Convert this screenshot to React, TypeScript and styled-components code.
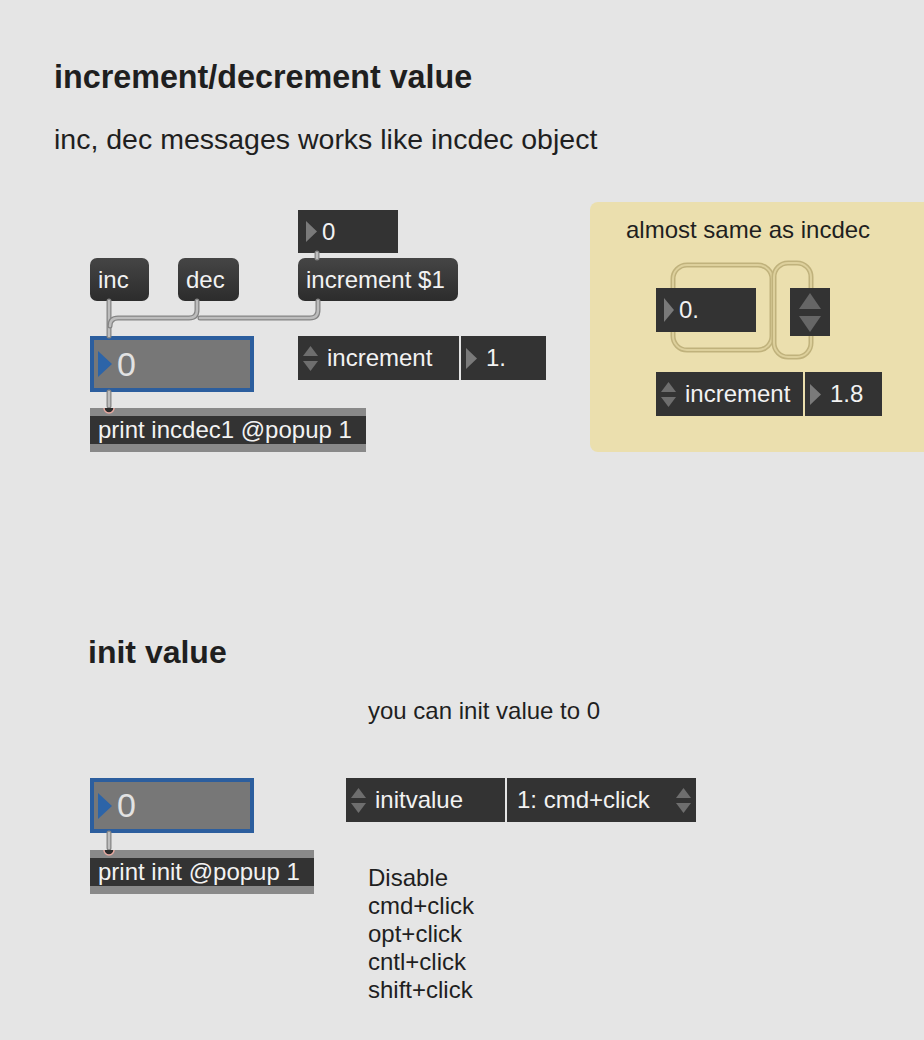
import styled, { createGlobalStyle, css } from "styled-components"

const GlobalStyle = createGlobalStyle`
  html, body {
    margin: 0;
    padding: 0;
    background: #e5e5e5;
  }
  body {
    font-family: "Liberation Sans", Arial, sans-serif;
  }
`

type Pos = { $x: number; $y: number; $w?: number; $h?: number }

// patcher objects sit on a free canvas: their place is the content itself
const at = css<Pos>`
  position: absolute;
  left: ${p => p.$x}px;
  top: ${p => p.$y}px;
  ${p => (p.$w !== undefined ? `width: ${p.$w}px;` : "")}
  ${p => (p.$h !== undefined ? `height: ${p.$h}px;` : "")}
  box-sizing: border-box;
`

const Canvas = styled.div`
  position: relative;
  width: 924px;
  height: 1040px;
  overflow: hidden;
  background: #e5e5e5;
`

const Comment = styled.div<Pos & { $size: number; $bold?: boolean }>`
  ${at}
  font-size: ${p => p.$size}px;
  font-weight: ${p => (p.$bold ? 700 : 400)};
  line-height: ${p => (p.$bold ? 1 : "28px")};
  color: #1f1f1f;
  white-space: pre;
`

const Panel = styled.div<Pos>`
  ${at}
  background: #ebdfae;
  border-radius: 8px;
`

const Message = styled.div<Pos>`
  ${at}
  display: flex;
  align-items: center;
  padding: 0 8px;
  border-radius: 7px;
  background: linear-gradient(#454545, #2c2c2c);
  color: #f2f2f2;
  font-size: 24px;
  white-space: pre;
`

const NumBox = styled.div<Pos>`
  ${at}
  display: flex;
  align-items: center;
  gap: 5px;
  padding-left: 8px;
  background: #333333;
  color: #f2f2f2;
  font-size: 24px;
`

const BigNum = styled.div<Pos>`
  ${at}
  display: flex;
  align-items: center;
  gap: 5px;
  padding-left: 4px;
  border: 4px solid #2c5e9e;
  background: #777777;
  color: #e2e2e2;
  font-size: 34px;
`

const PrintObj = styled.div<Pos>`
  ${at}
  display: flex;
  align-items: center;
  padding-left: 8px;
  border-top: 8px solid #898989;
  border-bottom: 8px solid #898989;
  background: #333333;
  color: #f2f2f2;
  font-size: 24px;
  white-space: pre;
`

const AttrRow = styled.div<Pos>`
  ${at}
  display: flex;
  gap: 2px;
`

const Cell = styled.div<{ $w: number }>`
  width: ${p => p.$w}px;
  display: flex;
  align-items: center;
  gap: 9px;
  padding: 0 5px;
  box-sizing: border-box;
  background: #333333;
  color: #f2f2f2;
  font-size: 24px;
  white-space: pre;
`

const MenuText = styled.span`
  flex: 1;
  padding-left: 5px;
`

const Spinner = styled.div<Pos>`
  ${at}
  display: flex;
  align-items: center;
  justify-content: center;
  background: #333333;
`

const Overlay = styled.svg`
  position: absolute;
  left: 0;
  top: 0;
  pointer-events: none;
`

const Tri = ({ color = "#7a7a7a", w = 11, h = 21 }: { color?: string; w?: number; h?: number }) => (
  <svg width={w} height={h} viewBox={`0 0 ${w} ${h}`}>
    <polygon points={`0,0 ${w},${h / 2} 0,${h}`} fill={color} />
  </svg>
)

const Arrows = ({ w = 15, h = 10, gap = 5, color = "#6e6e6e" }: { w?: number; h?: number; gap?: number; color?: string }) => (
  <svg width={w} height={h * 2 + gap} viewBox={`0 0 ${w} ${h * 2 + gap}`}>
    <polygon points={`0,${h} ${w / 2},0 ${w},${h}`} fill={color} />
    <polygon points={`0,${h + gap} ${w},${h + gap} ${w / 2},${h * 2 + gap}`} fill={color} />
  </svg>
)

const Cord = ({ d }: { d: string }) => (
  <g fill="none" strokeLinecap="round">
    <path d={d} stroke="#858585" strokeWidth={5} />
    <path d={d} stroke="#bdbdbd" strokeWidth={2.5} />
  </g>
)

// inlet dot: only the lower half shows inside the object's top band
const InletDot = ({ x, y }: { x: number; y: number }) => (
  <path
    d={`M${x - 5} ${y} A5 5 0 0 0 ${x + 5} ${y}`}
    fill="#2a2a2a"
    stroke="#e6a8a0"
    strokeWidth={1.5}
  />
)

const Loop = ({ x, y, w, h, r }: { x: number; y: number; w: number; h: number; r: number }) => (
  <g fill="none">
    <rect x={x} y={y} width={w} height={h} rx={r} stroke="#c0b27c" strokeWidth={5} />
    <rect x={x} y={y} width={w} height={h} rx={r} stroke="#ddd09c" strokeWidth={2} />
  </g>
)

export default function App() {
  return (
    <Canvas>
      <GlobalStyle />

      <Comment $x={54} $y={61} $size={32.3} $bold>increment/decrement value</Comment>
      <Comment $x={54} $y={125} $size={28.5}>inc, dec messages works like incdec object</Comment>

      <Panel $x={590} $y={202} $w={360} $h={250} />
      <Overlay width={924} height={1040}>
        <Loop x={673} y={265} w={99} h={85} r={14} />
        <Loop x={774} y={263} w={37} h={94} r={14} />
      </Overlay>
      <Comment $x={626} $y={216} $size={24}>almost same as incdec</Comment>
      <NumBox $x={656} $y={288} $w={100} $h={44}>
        <Tri w={10} h={24} />
        0.
      </NumBox>
      <Spinner $x={790} $y={288} $w={40} $h={48}>
        <Arrows w={22} h={16} gap={7} color="#666666" />
      </Spinner>
      <AttrRow $x={656} $y={372} $h={44}>
        <Cell $w={147}>
          <Arrows />
          increment
        </Cell>
        <Cell $w={77}>
          <Tri />
          1.8
        </Cell>
      </AttrRow>

      <NumBox $x={298} $y={210} $w={100} $h={43}>
        <Tri />
        0
      </NumBox>
      <Message $x={90} $y={258} $w={59} $h={43}>inc</Message>
      <Message $x={178} $y={258} $w={61} $h={43}>dec</Message>
      <Message $x={298} $y={258} $w={160} $h={43}>increment $1</Message>
      <BigNum $x={90} $y={336} $w={164} $h={56}>
        <Tri color="#2c64a8" w={14} h={26} />
        0
      </BigNum>
      <PrintObj $x={90} $y={408} $w={276} $h={44}>print incdec1 @popup 1</PrintObj>
      <AttrRow $x={298} $y={336} $h={44}>
        <Cell $w={161}>
          <Arrows />
          increment
        </Cell>
        <Cell $w={85}>
          <Tri />
          1.
        </Cell>
      </AttrRow>

      <Comment $x={88} $y={636} $size={32} $bold>init value</Comment>
      <Comment $x={368} $y={697} $size={24}>you can init value to 0</Comment>
      <BigNum $x={90} $y={778} $w={164} $h={55}>
        <Tri color="#2c64a8" w={14} h={26} />
        0
      </BigNum>
      <PrintObj $x={90} $y={850} $w={224} $h={44}>print init @popup 1</PrintObj>
      <AttrRow $x={346} $y={778} $h={44}>
        <Cell $w={159}>
          <Arrows />
          initvalue
        </Cell>
        <Cell $w={189}>
          <MenuText>1: cmd+click</MenuText>
          <Arrows />
        </Cell>
      </AttrRow>
      <Comment $x={368} $y={864} $size={24}>
        {"Disable\ncmd+click\nopt+click\ncntl+click\nshift+click"}
      </Comment>

      <Overlay width={924} height={1040}>
        <Cord d="M109 301 V336" />
        <Cord d="M197 301 V310 Q197 318 189 318 H118 Q110 318 110 326" />
        <Cord d="M318 301 V310 Q318 318 310 318 H200" />
        <Cord d="M317 253 V258" />
        <Cord d="M109 392 V406" />
        <Cord d="M109 833 V848" />
        <InletDot x={109} y={408} />
        <InletDot x={109} y={850} />
      </Overlay>
    </Canvas>
  )
}
